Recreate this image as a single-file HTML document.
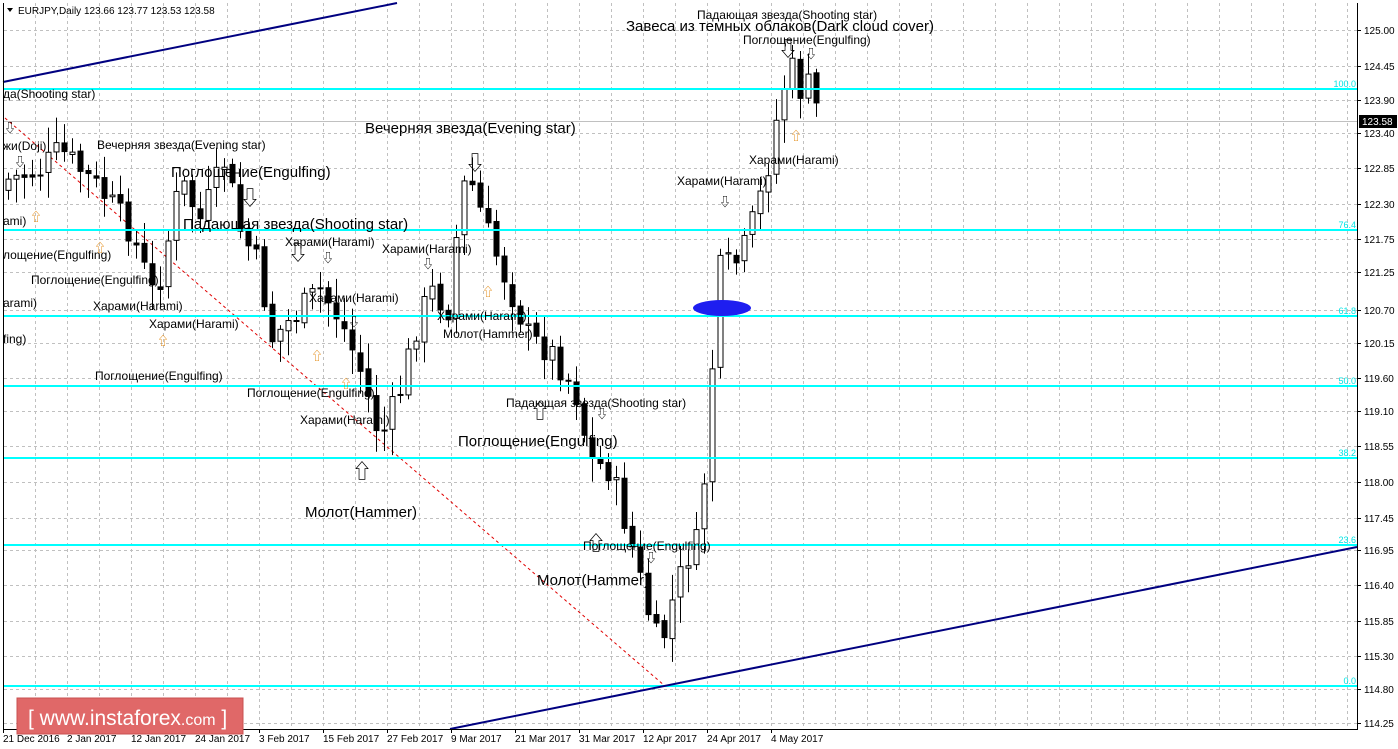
<!DOCTYPE html>
<html><head><meta charset="utf-8">
<style>
html,body{margin:0;padding:0;background:#fff;width:1398px;height:749px;overflow:hidden}
svg{display:block}
text{font-family:"Liberation Sans","Noto Sans CJK SC",sans-serif}
</style></head><body>
<svg id="s" width="1398" height="749" xmlns="http://www.w3.org/2000/svg">
<rect width="1398" height="749" fill="#fff"/>
<g id="grid" stroke="#c0c0c0" stroke-dasharray="3,3" stroke-width="1"></g>
<line x1="4" y1="121.5" x2="1357" y2="121.5" stroke="#c0c0c0"/>
<line x1="5" y1="118" x2="665" y2="686" stroke="#e00000" stroke-dasharray="3,3" stroke-width="1"/>
<g id="candles"></g>
<g stroke="#00ffff" stroke-width="2">
<line x1="4" y1="89" x2="1357" y2="89"/>
<line x1="4" y1="230" x2="1357" y2="230"/>
<line x1="4" y1="316" x2="1357" y2="316"/>
<line x1="4" y1="386" x2="1357" y2="386"/>
<line x1="4" y1="458" x2="1357" y2="458"/>
<line x1="4" y1="545" x2="1357" y2="545"/>
<line x1="4" y1="686" x2="1357" y2="686"/>
</g>
<g fill="#00e5e5" font-size="9" text-anchor="end">
<text x="1356" y="87">100.0</text><text x="1356" y="228">76.4</text><text x="1356" y="314">61.8</text>
<text x="1356" y="384">50.0</text><text x="1356" y="456">38.2</text><text x="1356" y="543">23.6</text><text x="1356" y="684">0.0</text>
</g>
<line x1="3" y1="82" x2="397" y2="3" stroke="#000080" stroke-width="2"/>
<line x1="450" y1="729" x2="1357" y2="547" stroke="#000080" stroke-width="2"/>
<ellipse cx="722" cy="308" rx="29" ry="8" fill="#1e1ef0"/>
<g fill="#000" font-size="12">
<text x="697" y="19">Падающая звезда(Shooting star)</text>
<text x="743" y="44">Поглощение(Engulfing)</text>
<text x="3" y="98">да(Shooting star)</text>
<text x="3" y="150">жи(Doji)</text>
<text x="97" y="149">Вечерняя звезда(Evening star)</text>
<text x="749" y="164">Харами(Harami)</text>
<text x="677" y="185">Харами(Harami)</text>
<text x="3" y="225">ami)</text>
<text x="285" y="246">Харами(Harami)</text>
<text x="382" y="253">Харами(Harami)</text>
<text x="3" y="259">лощение(Engulfing)</text>
<text x="31" y="284">Поглощение(Engulfing)</text>
<text x="309" y="302">Харами(Harami)</text>
<text x="3" y="307">arami)</text>
<text x="93" y="310">Харами(Harami)</text>
<text x="437" y="320">Харами(Harami)</text>
<text x="149" y="328">Харами(Harami)</text>
<text x="443" y="338">Молот(Hammer)</text>
<text x="3" y="343">fing)</text>
<text x="95" y="380">Поглощение(Engulfing)</text>
<text x="247" y="397">Поглощение(Engulfing)</text>
<text x="506" y="407">Падающая звезда(Shooting star)</text>
<text x="300" y="424">Харами(Harami)</text>
<text x="583" y="550">Поглощение(Engulfing)</text>
</g>
<g fill="#000" font-size="15">
<text x="626" y="31">Завеса из темных облаков(Dark cloud cover)</text>
<text x="365" y="133">Вечерняя звезда(Evening star)</text>
<text x="171" y="177">Поглощение(Engulfing)</text>
<text x="183" y="229">Падающая звезда(Shooting star)</text>
<text x="458" y="446">Поглощение(Engulfing)</text>
<text x="305" y="517">Молот(Hammer)</text>
<text x="537" y="585">Молот(Hammer)</text>
</g>
<g font-size="12" fill="#000">
<text x="4" y="132">⇩</text><text x="14" y="166">⇩</text><text x="719" y="206">⇩</text><text x="805" y="58">⇩</text>
<text x="596" y="418">⇩</text><text x="645" y="562">⇩</text><text x="422" y="268">⇩</text><text x="322" y="262">⇩</text>
<text x="348" y="326">⇩</text>
</g>
<g font-size="12" fill="#e08000">
<text x="30" y="221">⇧</text><text x="94" y="252">⇧</text><text x="157" y="345">⇧</text><text x="311" y="360">⇧</text>
<text x="482" y="296">⇧</text><text x="790" y="140">⇧</text><text x="340" y="388">⇧</text>
</g>
<g font-size="20" fill="#000">
<text x="240" y="205">⇩</text><text x="465" y="170">⇩</text><text x="288" y="260">⇩</text><text x="778" y="56">⇩</text>
<text x="352" y="478">⇧</text><text x="586" y="550">⇧</text><text x="530" y="418">⇧</text>
</g>
<line x1="3.5" y1="3" x2="3.5" y2="729" stroke="#000"/>
<line x1="1357.5" y1="3" x2="1357.5" y2="729" stroke="#000"/>
<line x1="3" y1="729.5" x2="1358" y2="729.5" stroke="#000"/>
<g id="axis" font-size="10" fill="#000"></g>
<rect x="1359" y="115" width="38" height="13" fill="#000"/>
<text x="1362" y="125" font-size="10" fill="#fff">123.58</text>
<path d="M7 8 L13 8 L10 12 Z" fill="#000"/>
<text x="18" y="14" font-size="10" fill="#000">EURJPY,Daily  123.66 123.77 123.53 123.58</text>
<rect x="17" y="698" width="226" height="36" fill="#e06868" stroke="#c85050"/>
<text x="28" y="725" font-size="21" fill="#fff">[  www.instaforex<tspan font-size="16">.com</tspan> ]</text>
</svg>
<script>
(function(){
var ns="http://www.w3.org/2000/svg";
function el(t,a,p){var e=document.createElementNS(ns,t);for(var k in a)e.setAttribute(k,a[k]);p.appendChild(e);return e;}
var grid=document.getElementById('grid'),axis=document.getElementById('axis');
var lv=[["125.00",30],["124.45",66],["123.90",100],["123.40",133],["122.85",168],["122.30",204],["121.75",239],["121.25",272],["120.70",310],["120.15",343],["119.60",378],["119.10",411],["118.55",446],["118.00",482],["117.45",518],["116.95",550],["116.40",585],["115.85",621],["115.30",656],["114.80",689],["114.25",723]];
lv.forEach(function(l){el('line',{x1:4,x2:1357,y1:l[1]+.5,y2:l[1]+.5},grid);el('line',{x1:1357,x2:1361,y1:l[1]+.5,y2:l[1]+.5,stroke:'#000'},axis);var t=el('text',{x:1364,y:l[1]+4},axis);t.textContent=l[0];});
for(var x=35.5;x<1357;x+=32)el('line',{x1:x,x2:x,y1:3,y2:729},grid);
var d=["21 Dec 2016","2 Jan 2017","12 Jan 2017","24 Jan 2017","3 Feb 2017","15 Feb 2017","27 Feb 2017","9 Mar 2017","21 Mar 2017","31 Mar 2017","12 Apr 2017","24 Apr 2017","4 May 2017"];
d.forEach(function(s,i){var x=3+64*i;el('line',{x1:x+.5,x2:x+.5,y1:729,y2:733,stroke:'#000'},axis);var t=el('text',{x:x,y:742},axis);t.textContent=s;});
var P=[[6,180],[40,170],[60,150],[100,190],[130,230],[155,300],[170,230],[180,180],[200,220],[225,160],[240,230],[260,270],[270,340],[290,320],[300,310],[320,290],[340,320],[360,370],[380,440],[400,390],[415,330],[430,290],[450,310],[460,190],[470,180],[490,240],[510,290],[530,340],[550,350],[575,390],[590,460],[610,470],[630,540],[650,620],[660,650],[675,590],[690,550],[700,540],[710,390],[720,270],[740,260],[750,230],[765,180],[780,100],[790,65],[800,90],[810,85],[820,120]];
function py(x){for(var i=0;i<P.length-1;i++){if(x<=P[i+1][0]){var f=(x-P[i][0])/(P[i+1][0]-P[i][0]);return P[i][1]+f*(P[i+1][1]-P[i][1]);}}return P[P.length-1][1];}
var seed=7;function r(){seed=(seed*9301+49297)%233280;return seed/233280;}
var g=document.getElementById('candles');var prev=py(6)+10;
for(var x=8;x<=820;x+=8){var c=py(x)+(r()-.5)*30;var o=prev+(r()-.5)*6;var tp=Math.min(o,c),bt=Math.max(o,c);if(bt-tp<1)bt=tp+1;
var hi=tp-4-r()*22,lo=bt+4+r()*22;
el('line',{x1:x+.5,x2:x+.5,y1:hi,y2:lo,stroke:'#000'},g);
el('rect',{x:x-2,y:tp,width:5,height:bt-tp,fill:c<o?'#fff':'#000',stroke:'#000'},g);prev=c;}
})();
</script>
</body></html>
